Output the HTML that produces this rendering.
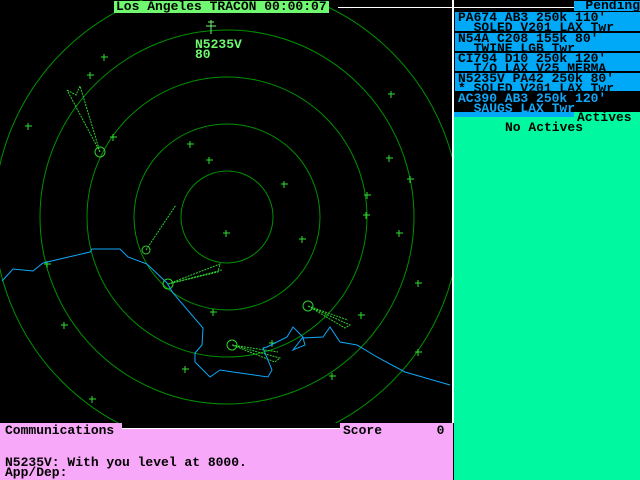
<!DOCTYPE html>
<html><head><style>
body{margin:0;width:640px;height:480px;background:#000;overflow:hidden;position:relative;font-family:"Liberation Mono",monospace;font-weight:bold;font-size:13px;}
.a{position:absolute;white-space:pre;line-height:10px;}
.box{position:absolute;left:455px;width:185px;background:#00a8f8;color:#000;}
</style></head><body>
<svg width="640" height="480" style="position:absolute;left:0;top:0">
<rect x="0" y="0" width="453" height="423" fill="#000"/>
<g fill="none" stroke="#009000" stroke-width="1">
<circle cx="227" cy="217" r="46"/><circle cx="227" cy="217" r="93"/><circle cx="227" cy="217" r="140"/><circle cx="227" cy="217" r="187"/><circle cx="227" cy="217" r="233"/>
</g>
<g stroke="#30e030" stroke-width="1">
<path d="M101 57h7M104 54v7M87 75h7M90 72v7M25 126h7M28 123v7M110 137h7M113 134v7M187 144h7M190 141v7M206 160h7M209 157v7M281 184h7M284 181v7M223 233h7M226 230v7M299 239h7M302 236v7M363 215h7M366 212v7M388 94h7M391 91v7M386 158h7M389 155v7M407 179h7M410 176v7M364 195h7M367 192v7M396 233h7M399 230v7M61 325h7M64 322v7M182 369h7M185 366v7M210 312h7M213 309v7M89 399h7M92 396v7M329 376h7M332 373v7M415 352h7M418 349v7M415 283h7M418 280v7M358 315h7M361 312v7M269 343h7M272 340v7M44 264h7M47 261v7"/>
</g>
<g stroke="#30d030" fill="none" stroke-dasharray="2,1">
<circle cx="100" cy="152" r="5" stroke-dasharray="none"/>
<path d="M100 152L67 90M100 152L80 86L76 95L67 90"/>
<circle cx="146" cy="250" r="4" stroke-dasharray="none"/><path d="M146 250L176 205"/>
<circle cx="168" cy="284" r="5" stroke-dasharray="none"/><path d="M168 284L220 264L218 272ZM168 284L222 270"/>
<circle cx="308" cy="306" r="5" stroke-dasharray="none"/><path d="M308 306L350 325L345 328ZM308 306L348 320"/>
<circle cx="232" cy="345" r="5" stroke-dasharray="none"/><path d="M232 345L280 358L275 362ZM232 345L278 352"/>
</g>
<path d="M211 20v14M206 26h10M208 22h6" stroke="#70f870" fill="none"/>
<polyline fill="none" stroke="#10a8f8" stroke-width="1" points="2,281 13,269 33,271 43,263 90,252 92,249 120,249 128,257 147,264 167,283 173,293 203,328 202,345 195,353 195,362 210,377 220,370 233,372 268,377 272,370 263,348 267,347 287,337 293,327 303,337 293,350 305,345 303,338 323,337 330,327 340,342 357,345 377,357 405,372 450,385"/>
<rect x="452" y="0" width="2" height="423" fill="#fff"/>
<rect x="338" y="7" width="236" height="1" fill="#fff"/>
</svg>
<div class="a" style="left:114px;top:1px;background:#70f870;color:#000;padding:1px 2px;line-height:10px">Los Angeles TRACON 00:00:07</div>
<div class="a" style="left:195px;top:40px;color:#70f870">N5235V
80</div>
<div class="a" style="left:574px;top:1px;width:66px;height:10px;background:#00a8f8;color:#000;text-align:right">Pending</div>
<div class="box" style="top:12px;height:19px"><div class="a" style="left:3px;top:1px">PA674 AB3 250k 110'
  SOLED V201 LAX Twr</div></div>
<div class="box" style="top:33px;height:18px"><div class="a" style="left:3px;top:1px">N54A C208 155k 80'
  TWINE LGB Twr</div></div>
<div class="box" style="top:53px;height:18px"><div class="a" style="left:3px;top:1px">CI794 D10 250k 120'
  T/O LAX V25 MERMA</div></div>
<div class="box" style="top:73px;height:18px"><div class="a" style="left:3px;top:1px">N5235V PA42 250k 80'
* SOLED V201 LAX Twr</div></div>
<div class="box" style="top:93px;height:19px;background:#000;color:#10a8f8"><div class="a" style="left:3px;top:1px">AC390 AB3 250k 120'
  SAUGS LAX Twr</div></div>
<div style="position:absolute;left:454px;top:112px;width:186px;height:368px;background:#00f8a0"></div>
<div style="position:absolute;left:454px;top:112px;width:120px;height:5px;background:#00a8f8"></div>
<div class="a" style="left:577px;top:113px;color:#000">Actives</div>
<div class="a" style="left:505px;top:123px;color:#000">No Actives</div>
<div style="position:absolute;left:0;top:423px;width:453px;height:57px;background:#f8a8f8"></div>
<div style="position:absolute;left:122px;top:423px;width:218px;height:5px;background:#000;border-bottom:1px solid #fff"></div>
<div class="a" style="left:5px;top:426px;color:#000">Communications</div>
<div class="a" style="left:343px;top:426px;color:#000">Score       0</div>
<div class="a" style="left:5px;top:458px;color:#000">N5235V: With you level at 8000.
App/Dep:</div>
</body></html>
